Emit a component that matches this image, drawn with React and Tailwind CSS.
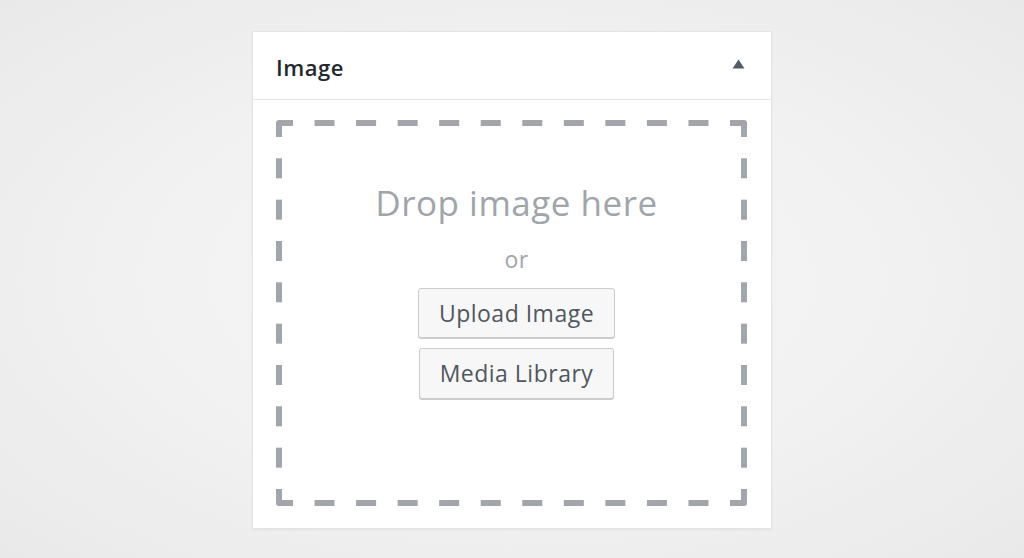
function DashedFrame({ w, h, t = 6, arm = 17, dash = 20, nx = 10, ny = 8, color = "#a2a5a9" }) {
  const parts = [];
  const half = t / 2;
  const gx = (w - 2 * arm - nx * dash) / (nx + 1);
  for (let i = 0; i < nx; i++) {
    const x = arm + gx + i * (dash + gx);
    parts.push(<rect key={"t" + i} x={x} y={0} width={dash} height={t} fill={color} />);
    parts.push(<rect key={"b" + i} x={x} y={h - t} width={dash} height={t} fill={color} />);
  }
  const gy = (h - 2 * arm - ny * dash) / (ny + 1);
  for (let i = 0; i < ny; i++) {
    const y = arm + gy + i * (dash + gy);
    parts.push(<rect key={"l" + i} x={0} y={y} width={t} height={dash} fill={color} />);
    parts.push(<rect key={"r" + i} x={w - t} y={y} width={t} height={dash} fill={color} />);
  }
  const c = {
    fill: "none",
    stroke: color,
    strokeWidth: t,
    strokeLinejoin: "round",
  };
  return (
    <svg
      width={w}
      height={h}
      viewBox={`0 0 ${w} ${h}`}
      className="absolute inset-0 pointer-events-none"
    >
      {parts}
      <path d={`M${half} ${arm} L${half} ${half} L${arm} ${half}`} {...c} />
      <path d={`M${w - arm} ${half} L${w - half} ${half} L${w - half} ${arm}`} {...c} />
      <path d={`M${w - half} ${h - arm} L${w - half} ${h - half} L${w - arm} ${h - half}`} {...c} />
      <path d={`M${arm} ${h - half} L${half} ${h - half} L${half} ${h - arm}`} {...c} />
    </svg>
  );
}

export default function App() {
  const font = { fontFamily: '"Open Sans", "Noto Sans", sans-serif' };
  return (
    <div
      className="w-full h-[558px] flex justify-center pt-[31px] bg-[radial-gradient(ellipse_at_center,#f6f6f6_0%,#f1f1f1_55%,#e9e9e9_100%)]"
      style={font}
    >
      <div className="w-[520px] h-[498px] bg-white border border-[#e2e4e7] shadow-[0_1px_2px_rgba(0,0,0,0.06)] flex flex-col">
        <div className="h-[68px] shrink-0 border-b border-[#e2e4e7] pl-[23px] pr-[26px] flex items-center justify-between">
          <span className="mt-[4px] text-[22px] font-semibold text-[#23282d] tracking-[0.5px]">Image</span>
          <svg width="13" height="10" viewBox="0 0 13 10" className="mt-[-3px]">
            <path d="M6.5 0.5 L12.5 9.5 L0.5 9.5 Z" fill="#555d66" />
          </svg>
        </div>
        <div className="flex-1 pl-[23px] pr-[24px] pt-[20px] pb-[22px]">
          <div className="relative w-[471px] h-[386px] pt-[6px] pb-[6px] pl-[16px] pr-[6px] flex flex-col items-center">
            <DashedFrame w={471} h={386} />
            <div className="mt-[57px] text-[35px] leading-[40px] text-[#a0a5aa] tracking-[0.5px]">Drop image here</div>
            <div className="mt-[22px] text-[23px] leading-[28px] text-[#a0a5aa] tracking-[0.5px]">or</div>
            <button className="mt-[15px] h-[50px] px-[20px] text-[23px] text-[#50575e] bg-[#f7f7f7] border border-[#cccccc] rounded-[3px] shadow-[0_1px_0_#cccccc] tracking-[0.5px]">
              Upload Image
            </button>
            <button className="mt-[10px] h-[51px] px-[20px] text-[23px] text-[#50575e] bg-[#f7f7f7] border border-[#cccccc] rounded-[3px] shadow-[0_1px_0_#cccccc] tracking-[0.5px]">
              Media Library
            </button>
          </div>
        </div>
      </div>
    </div>
  );
}
